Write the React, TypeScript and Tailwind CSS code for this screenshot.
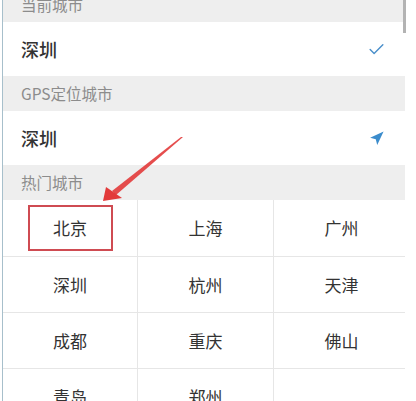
import { Check } from 'lucide-react';

const hotCities = ['北京', '上海', '广州', '深圳', '杭州', '天津', '成都', '重庆', '佛山', '青岛', '郑州', ''];

const SectionHeader = ({ title }: { title: string }) => (
  <div className="h-[35px] bg-[#eeeeee] flex items-center pl-[18px] text-[15.5px] text-[#8c8c8c]">{title}</div>
);

const CityRow = ({ name, children }: { name: string; children: React.ReactNode }) => (
  <div className="h-[54px] bg-white flex items-center justify-between pl-[18px] pr-[18px] text-[18px] font-medium text-[#333333]">
    <span>{name}</span>
    {children}
  </div>
);

export default function App() {
  return (
    <div
      className="relative w-[416px] h-[401px] overflow-hidden bg-white"
      style={{ fontFamily: '"Noto Sans CJK SC", "Noto Sans", sans-serif' }}
    >
      {/* left frame line */}
      <div className="absolute left-[2px] top-0 bottom-0 w-px bg-[#a7bfcb]" />
      {/* scrollbar */}
      <div className="absolute left-[403px] top-0 w-[3px] h-[33px] bg-[#b3b3b3]" />

      <div className="ml-[3px] w-[402px] -mt-[13px] overflow-hidden">
        <SectionHeader title="当前城市" />
        <CityRow name="深圳">
          <Check className="w-[19px] h-[19px] text-[#4a8fca] mr-[1px]" strokeWidth={1.8} />
        </CityRow>
        <SectionHeader title="GPS定位城市" />
        <CityRow name="深圳">
          <svg viewBox="0 0 24 24" className="w-[17px] h-[17px] mr-[2px]">
            <polygon points="3 11 22 2 13 21 11 13 3 11" fill="#3b8ccc" />
          </svg>
        </CityRow>
        <SectionHeader title="热门城市" />
        <div className="grid grid-cols-[135px_136px_135px] w-[406px]">
          {hotCities.map((city, i) => (
            <div
              key={i}
              className={`h-[56px] flex items-center justify-center text-[17px] text-[#333333] ${
                i >= 3 ? 'border-t border-[#e6e6e6]' : ''
              } ${i % 3 !== 2 ? 'border-r border-[#e6e6e6]' : ''}`}
            >
              {city === '北京' ? (
                <span className="w-[85px] h-[46px] flex items-center justify-center border-2 border-[#cf4b52]">
                  {city}
                </span>
              ) : (
                city
              )}
            </div>
          ))}
        </div>
      </div>

      {/* red annotation arrow */}
      <svg className="absolute left-0 top-0 pointer-events-none" width="416" height="401">
        <polygon points="183,137 181,137 112,191 116,195" fill="#e23a3a" opacity="0.9" />
        <polygon points="103,201 106,187 122,198" fill="#e23a3a" />
      </svg>
    </div>
  );
}
